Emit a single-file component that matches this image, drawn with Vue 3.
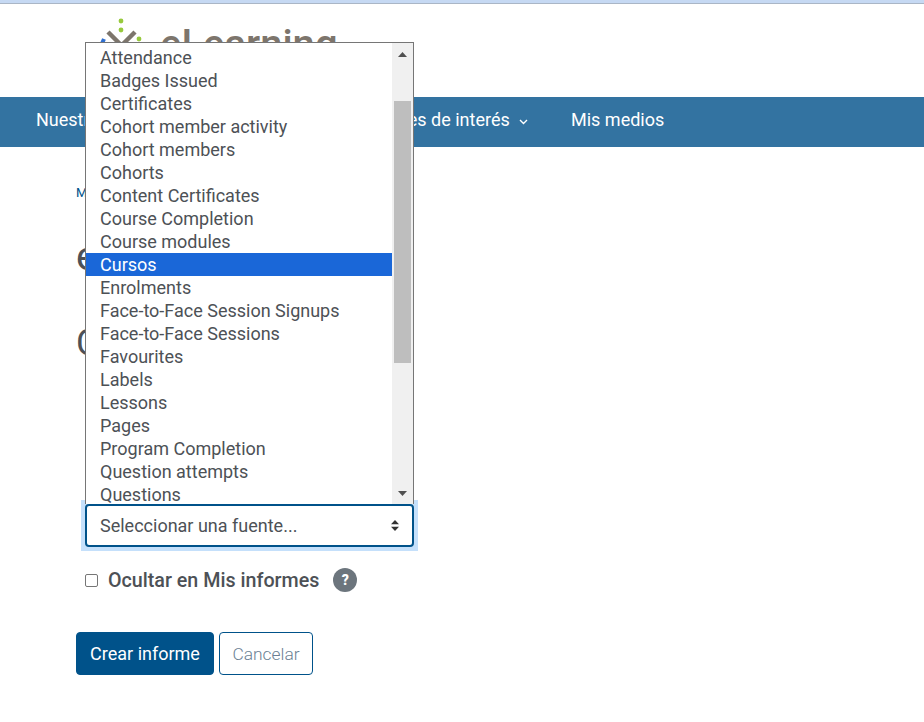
<script setup>
const options = ['Attendance','Badges Issued','Certificates','Cohort member activity','Cohort members','Cohorts','Content Certificates','Course Completion','Course modules','Cursos','Enrolments','Face-to-Face Session Signups','Face-to-Face Sessions','Favourites','Labels','Lessons','Pages','Program Completion','Question attempts','Questions']
</script>

<template>
  <div class="page">
    <div class="topstrip"></div>
    <header class="brand">
      <svg class="logo" width="60" height="60" viewBox="96 4 60 60">
        <circle cx="121" cy="21" r="2.4" fill="#97c93d"/>
        <circle cx="121" cy="30" r="2.4" fill="#97c93d"/>
        <circle cx="139" cy="39" r="2.4" fill="#97c93d"/>
        <path d="M108 32 L128 52 M135 32 L115 52" stroke="#7d756c" stroke-width="4.5" fill="none"/>
        <path d="M99 50 L104 39" stroke="#2f6fd0" stroke-width="4" fill="none"/>
      </svg>
      <span class="logo-text">eLearning</span>
    </header>
    <nav class="nav">
      <span class="nav-item first">Nuestros cursos</span>
      <span class="nav-item interest">Enlaces de interés <svg class="chev" width="9" height="6" viewBox="0 0 9 6"><path d="M1 1 L4.5 4.5 L8 1" fill="none" stroke="#fff" stroke-width="1.4"/></svg></span>
      <span class="nav-item">Mis medios</span>
    </nav>
    <main class="content">
      <div class="crumb">Mis informes</div>
      <h1 class="title">eLearning</h1>
      <h2 class="subtitle">Crear informe</h2>
      <div class="select-wrap">
        <div class="select">
          <span>Seleccionar una fuente...</span>
          <svg width="8" height="11" viewBox="0 0 8 11"><path d="M4 0 L8 4.2 H0 Z M4 11 L8 6.8 H0 Z" fill="#333"/></svg>
        </div>
      </div>
      <label class="check">
        <span class="box"></span>
        <span class="check-label">Ocultar en Mis informes</span>
        <span class="help">?</span>
      </label>
      <div class="actions">
        <button class="btn primary">Crear informe</button>
        <button class="btn secondary">Cancelar</button>
      </div>
    </main>
    <div class="dropdown">
      <ul class="list">
        <li v-for="o in options" :key="o" :class="{ selected: o === 'Cursos' }">{{ o }}</li>
      </ul>
      <div class="scrollbar">
        <svg class="arrow" width="13" height="7" viewBox="0 0 13 7"><path d="M6.5 1 L11 6 H2 Z" fill="#505050"/></svg>
        <div class="track"><div class="thumb"></div></div>
        <svg class="arrow" width="13" height="7" viewBox="0 0 13 7"><path d="M6.5 6 L11 1 H2 Z" fill="#505050"/></svg>
      </div>
    </div>
  </div>
</template>

<style>
html, body { margin: 0; background: #fff; }
</style>

<style scoped>
.page {
  position: relative;
  width: 924px;
  height: 722px;
  overflow: hidden;
  font-family: Roboto, "Liberation Sans", sans-serif;
  color: #4d5156;
  background: #fff;
}
.topstrip {
  height: 3px;
  background: #c6d9f3;
  border-bottom: 1px solid #aab6c6;
}
.brand { height: 93px; display: flex; align-items: flex-start; margin-left: 96px; }
.logo { display: block; flex: none; }
.logo-text {
  margin: 21px 0 0 4px;
  font-size: 40px;
  line-height: 40px;
  font-weight: 500;
  color: #7d756c;
}
.nav {
  height: 50px;
  box-sizing: border-box;
  padding: 0 0 6px 36px;
  background: #3373a1;
  color: #fff;
  display: flex;
  align-items: center;
  font-size: 18px;
}
.nav-item { white-space: nowrap; }
.nav-item.first { width: 328px; }
.interest { width: 207px; }
.chev { margin-left: 5px; vertical-align: 1px; }
.content { padding: 0 0 0 76px; }
.crumb { margin-top: 37px; font-size: 13px; line-height: 18px; color: #00528a; }
.title { margin: 33px 0 0; font-size: 40px; line-height: 44px; font-weight: 400; }
.subtitle { margin: 42px 0 0; font-size: 36px; line-height: 44px; font-weight: 400; }
.select-wrap { margin-top: 135px; margin-left: 5px; width: 337px; height: 51px; box-sizing: border-box; background: #c5e0fb; padding: 4px; }
.select {
  box-sizing: border-box;
  height: 43px;
  border: 2px solid #00528a;
  border-radius: 4px;
  background: #fff;
  display: flex;
  align-items: center;
  justify-content: space-between;
  padding: 0 13px 0 13px;
  font-size: 18px;
}
.check { display: flex; align-items: center; margin: 17px 0 0 9px; height: 24px; }
.box { width: 11px; height: 11px; border: 1px solid #767676; border-radius: 2px; background: #fff; flex: none; }
.check-label { margin-left: 10px; font-size: 19.7px; font-weight: 500; }
.help {
  margin-left: 14px; width: 24px; height: 24px; border-radius: 50%;
  background: #6c757d; color: #fff; font-size: 14px; font-weight: 900;
  display: flex; align-items: center; justify-content: center;
}
.actions { display: flex; gap: 5px; margin-top: 40px; }
.btn { box-sizing: border-box; height: 43px; border-radius: 4px; font-family: inherit; font-size: 18px; }
.primary { width: 138px; background: #00528a; border: 1px solid #00528a; color: #fff; }
.secondary { width: 94px; background: #fff; border: 1px solid #00528a; color: #6b7f93; font-weight: 300; font-size: 17.4px; }
.dropdown {
  position: absolute;
  left: 85px; top: 42px;
  width: 329px; height: 462px;
  box-sizing: border-box;
  border: 1px solid #767676;
  border-bottom: 0;
  background: #fff;
  display: flex;
  overflow: hidden;
}
.list {
  list-style: none; margin: 0; padding: 3px 0 0;
  flex: 1;
  font-size: 18px;
}
.list li { height: 23px; line-height: 23px; padding-left: 14px; white-space: nowrap; }
.list li.selected { background: #1a67d8; color: #fff; }
.scrollbar {
  width: 21px;
  background: #f0f0f0;
  display: flex; flex-direction: column; align-items: center;
  padding-top: 8px;
  box-sizing: border-box;
}
.track { flex: 1; width: 17px; margin-top: 36px; }
.thumb { height: 262px; background: #bebebe; }
.arrow { flex: none; margin-bottom: 7px; }
</style>
